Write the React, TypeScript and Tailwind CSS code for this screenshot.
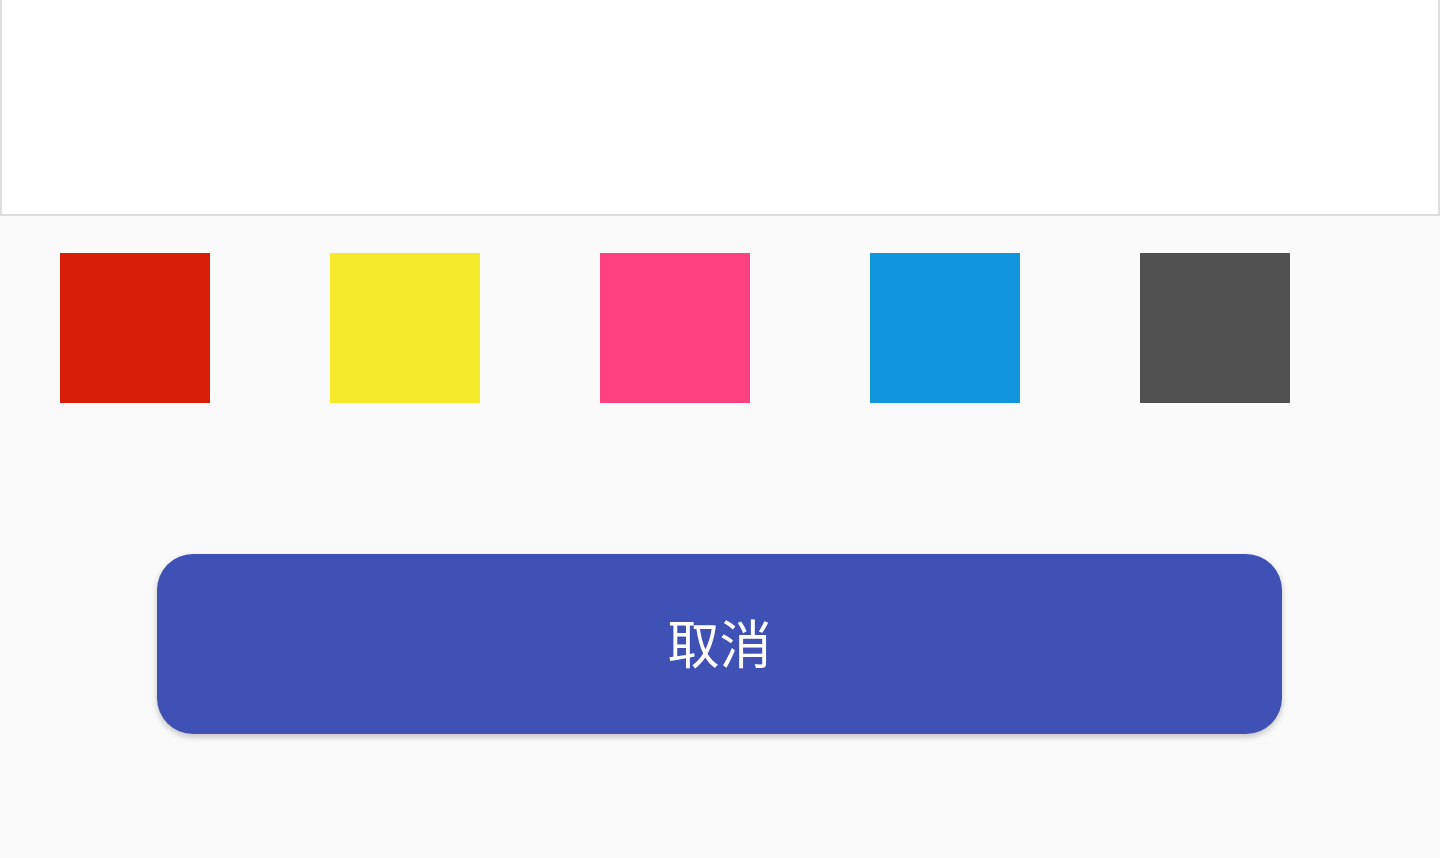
import React from "react";

export default function App() {
  const colors = ["bg-[#d81e06]", "bg-[#f4ea2a]", "bg-[#ff4081]", "bg-[#1296db]", "bg-[#515151]"];
  return (
    <div className="w-[1440px] h-[858px] bg-[#fafafa] overflow-hidden" style={{ fontFamily: '"Noto Sans CJK SC", "Noto Sans", sans-serif' }}>
      <div className="h-[216px] bg-white border-x-2 border-b-2 border-[#dddddd]" />
      <div className="flex gap-[120px] pl-[60px] pt-[37px]">
        {colors.map((c, i) => (
          <div key={i} className={`w-[150px] h-[150px] ${c}`} />
        ))}
      </div>
      <div className="pt-[151px] pl-[157px]">
        <button className="w-[1125px] h-[180px] rounded-[36px] bg-[#3f51b5] text-white text-[52px] leading-none shadow-[0_3px_6px_rgba(0,0,0,0.22)] flex items-center justify-center">
          <span className="-mt-[4px]">取消</span>
        </button>
      </div>
    </div>
  );
}
